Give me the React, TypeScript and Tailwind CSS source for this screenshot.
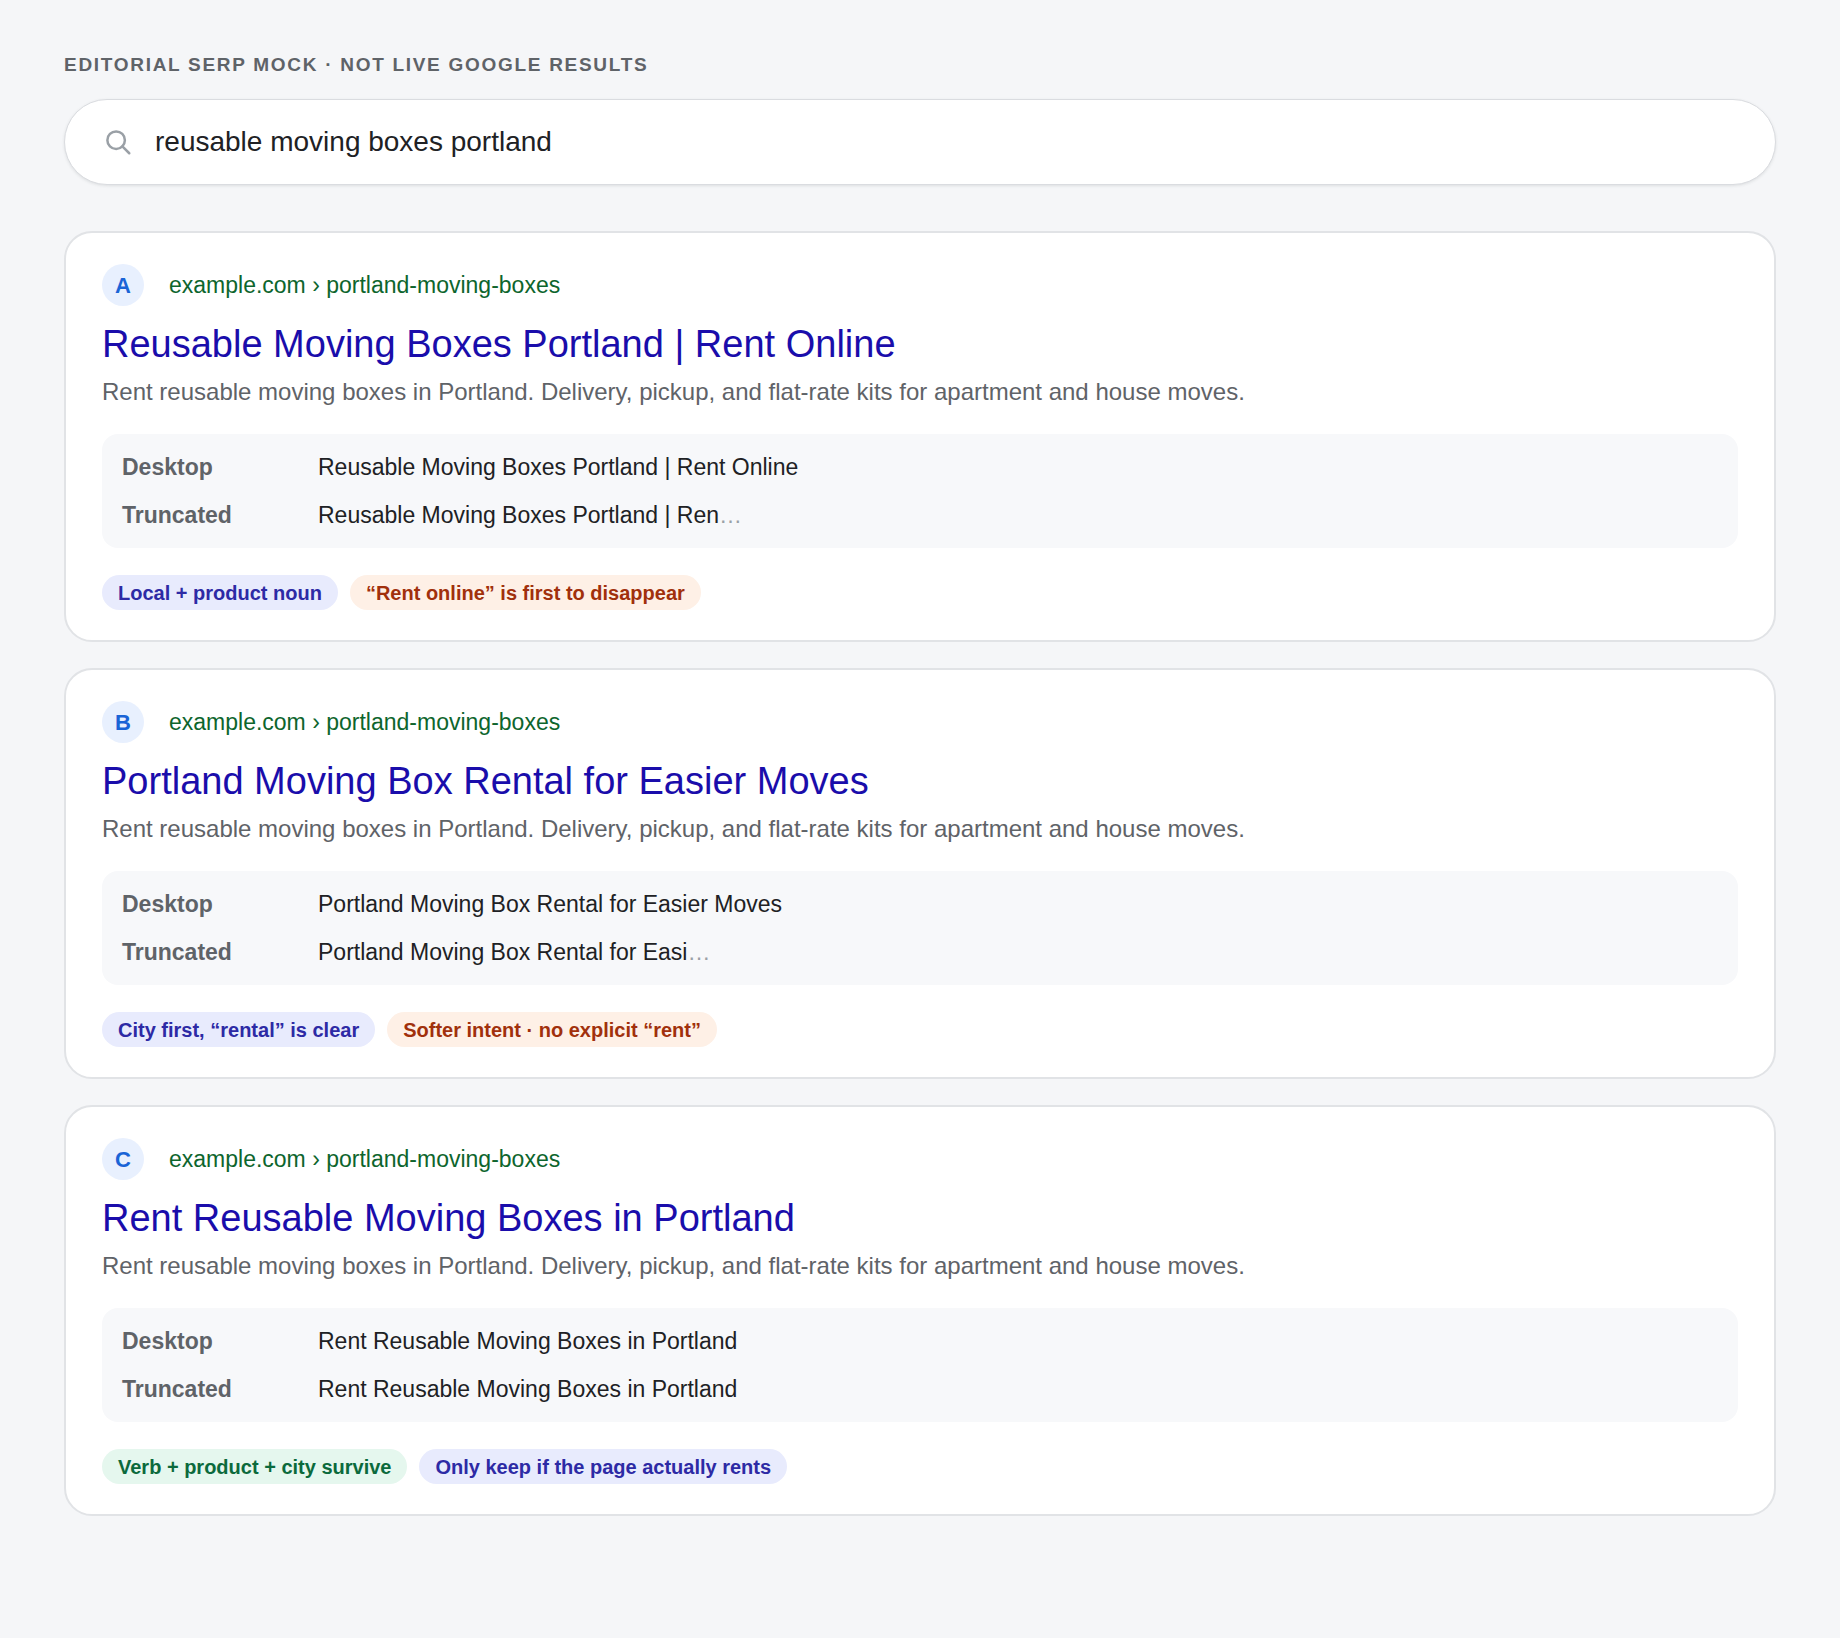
const results = [
  {
    letter: 'A',
    title: 'Reusable Moving Boxes Portland | Rent Online',
    truncated: 'Reusable Moving Boxes Portland | Ren',
    cut: true,
    chips: [
      { text: 'Local + product noun', tone: 'blue' },
      { text: '“Rent online” is first to disappear', tone: 'orange' },
    ],
  },
  {
    letter: 'B',
    title: 'Portland Moving Box Rental for Easier Moves',
    truncated: 'Portland Moving Box Rental for Easi',
    cut: true,
    chips: [
      { text: 'City first, “rental” is clear', tone: 'blue' },
      { text: 'Softer intent · no explicit “rent”', tone: 'orange' },
    ],
  },
  {
    letter: 'C',
    title: 'Rent Reusable Moving Boxes in Portland',
    truncated: 'Rent Reusable Moving Boxes in Portland',
    cut: false,
    chips: [
      { text: 'Verb + product + city survive', tone: 'green' },
      { text: 'Only keep if the page actually rents', tone: 'blue' },
    ],
  },
];

const chipTone: Record<string, string> = {
  blue: 'bg-[#e8ebfd] text-[#2d2aa5]',
  orange: 'bg-[#fef0e6] text-[#a1300c]',
  green: 'bg-[#e5f7ee] text-[#0b6a3c]',
};

export default function App() {
  return (
    <div className="min-h-[1638px] bg-[#f5f6f8] px-[64px] pt-[55px] pb-[90px] font-[family-name:Liberation_Sans,Arial,sans-serif]">
      <div className="text-[19px] font-bold tracking-[0.09em] text-[#5f6368] leading-none">
        EDITORIAL SERP MOCK · NOT LIVE GOOGLE RESULTS
      </div>

      {/* Search box */}
      <div className="mt-[25px] h-[86px] rounded-full border border-[#dadce0] bg-white shadow-[0_1px_3px_rgba(60,64,67,0.12)] flex items-center px-[38px] gap-[22px]">
        <svg width="30" height="30" viewBox="0 0 24 24" fill="none" stroke="#9aa0a6" strokeWidth="2" strokeLinecap="round">
          <circle cx="10.5" cy="10.5" r="7" />
          <path d="M15.5 15.5 21 21" />
        </svg>
        <span className="text-[28px] text-[#202124]">reusable moving boxes portland</span>
      </div>

      <div className="mt-[46px] flex flex-col gap-[26px]">
        {results.map((r) => (
          <div key={r.letter} className="rounded-[28px] border-2 border-[#e1e3e6] bg-white px-[36px] pt-[31px] pb-[30px]">
            <div className="flex items-center gap-[25px]">
              <div className="w-[42px] h-[42px] rounded-full bg-[#e8f0fe] text-[#1a64d6] font-bold text-[22px] flex items-center justify-center">
                {r.letter}
              </div>
              <span className="text-[23px] text-[#0d652d]">example.com › portland-moving-boxes</span>
            </div>
            <div className="mt-[14px] text-[38px] leading-[48px] text-[#1a0dab]">{r.title}</div>
            <div className="mt-[8px] text-[24px] leading-[32px] text-[#5f6368]">
              Rent reusable moving boxes in Portland. Delivery, pickup, and flat-rate kits for apartment and house moves.
            </div>
            <div className="mt-[26px] rounded-[16px] bg-[#f7f8fa] px-[20px] py-[9px] text-[23px] leading-[48px]">
              <div className="flex">
                <span className="w-[196px] font-bold text-[#5f6368]">Desktop</span>
                <span className="text-[#202124]">{r.title}</span>
              </div>
              <div className="flex">
                <span className="w-[196px] font-bold text-[#5f6368]">Truncated</span>
                <span className="text-[#202124]">
                  {r.truncated}
                  {r.cut && <span className="text-[#9aa0a6]">…</span>}
                </span>
              </div>
            </div>
            <div className="mt-[27px] flex gap-[12px]">
              {r.chips.map((c) => (
                <span key={c.text} className={`rounded-full px-[16px] h-[35px] flex items-center text-[20px] font-bold ${chipTone[c.tone]}`}>
                  {c.text}
                </span>
              ))}
            </div>
          </div>
        ))}
      </div>
    </div>
  );
}
